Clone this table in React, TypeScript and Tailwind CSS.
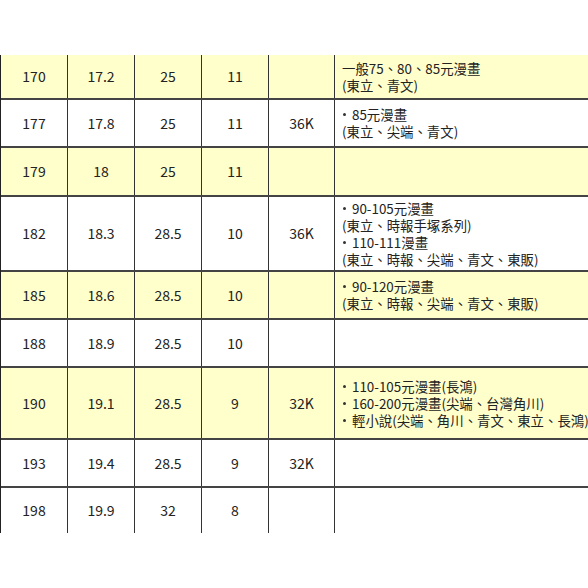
import React from 'react';

type Row = {
  cells: string[];
  note: { text: string; dot?: boolean }[];
  h: string;
  yellow: boolean;
};

const rows: Row[] = [
  { cells: ['170', '17.2', '25', '11', ''], note: [{ text: '一般75、80、85元漫畫' }, { text: '(東立、青文)' }], h: 'h-[45px]', yellow: true },
  { cells: ['177', '17.8', '25', '11', '36K'], note: [{ text: '85元漫畫', dot: true }, { text: '(東立、尖端、青文)' }], h: 'h-[48px]', yellow: false },
  { cells: ['179', '18', '25', '11', ''], note: [], h: 'h-[49px]', yellow: true },
  {
    cells: ['182', '18.3', '28.5', '10', '36K'],
    note: [
      { text: '90-105元漫畫', dot: true },
      { text: '(東立、時報手塚系列)' },
      { text: '110-111漫畫', dot: true },
      { text: '(東立、時報、尖端、青文、東販)' },
    ],
    h: 'h-[75px]',
    yellow: false,
  },
  {
    cells: ['185', '18.6', '28.5', '10', ''],
    note: [{ text: '90-120元漫畫', dot: true }, { text: '(東立、時報、尖端、青文、東販)' }],
    h: 'h-[48px]',
    yellow: true,
  },
  { cells: ['188', '18.9', '28.5', '10', ''], note: [], h: 'h-[48px]', yellow: false },
  {
    cells: ['190', '19.1', '28.5', '9', '32K'],
    note: [
      { text: '110-105元漫畫(長鴻)', dot: true },
      { text: '160-200元漫畫(尖端、台灣角川)', dot: true },
      { text: '輕小說(尖端、角川、青文、東立、長鴻)', dot: true },
    ],
    h: 'h-[72px]',
    yellow: true,
  },
  { cells: ['193', '19.4', '28.5', '9', '32K'], note: [], h: 'h-[48px]', yellow: false },
  { cells: ['198', '19.9', '32', '8', ''], note: [], h: 'h-[45px]', yellow: false },
];

const widths = ['w-[67px]', 'w-[67px]', 'w-[67px]', 'w-[67px]', 'w-[66px]'];

export default function App() {
  return (
    <div
      className="w-[588px] h-[588px] overflow-hidden bg-white pt-[55px] text-[#222]"
      style={{ fontFamily: '"Noto Sans CJK TC", "Noto Sans", sans-serif' }}
    >
      <div className="w-[700px] border-l border-[#222]">
        {rows.map((row, i) => (
          <div
            key={i}
            className={`flex ${row.h} ${i < rows.length - 1 ? 'border-b-2 border-[#444]' : ''} ${
              row.yellow ? 'bg-[#ffffcc]' : 'bg-white'
            }`}
          >
            {row.cells.map((c, j) => (
              <div
                key={j}
                className={`${widths[j]} shrink-0 flex items-center justify-center border-r border-[#333] text-[14px]`}
              >
                {c}
              </div>
            ))}
            <div className="flex-1 flex flex-col justify-center pl-[7px] text-[13.4px] leading-[17px] whitespace-nowrap">
              {row.note.map((n, k) => (
                <div key={k} className="flex items-center">
                  {n.dot && (
                    <span className="w-[10px] shrink-0 flex items-center pl-[1px]">
                      <span className="block w-[3px] h-[3px] rounded-full bg-[#333]" />
                    </span>
                  )}
                  <span>{n.text}</span>
                </div>
              ))}
            </div>
          </div>
        ))}
      </div>
    </div>
  );
}
